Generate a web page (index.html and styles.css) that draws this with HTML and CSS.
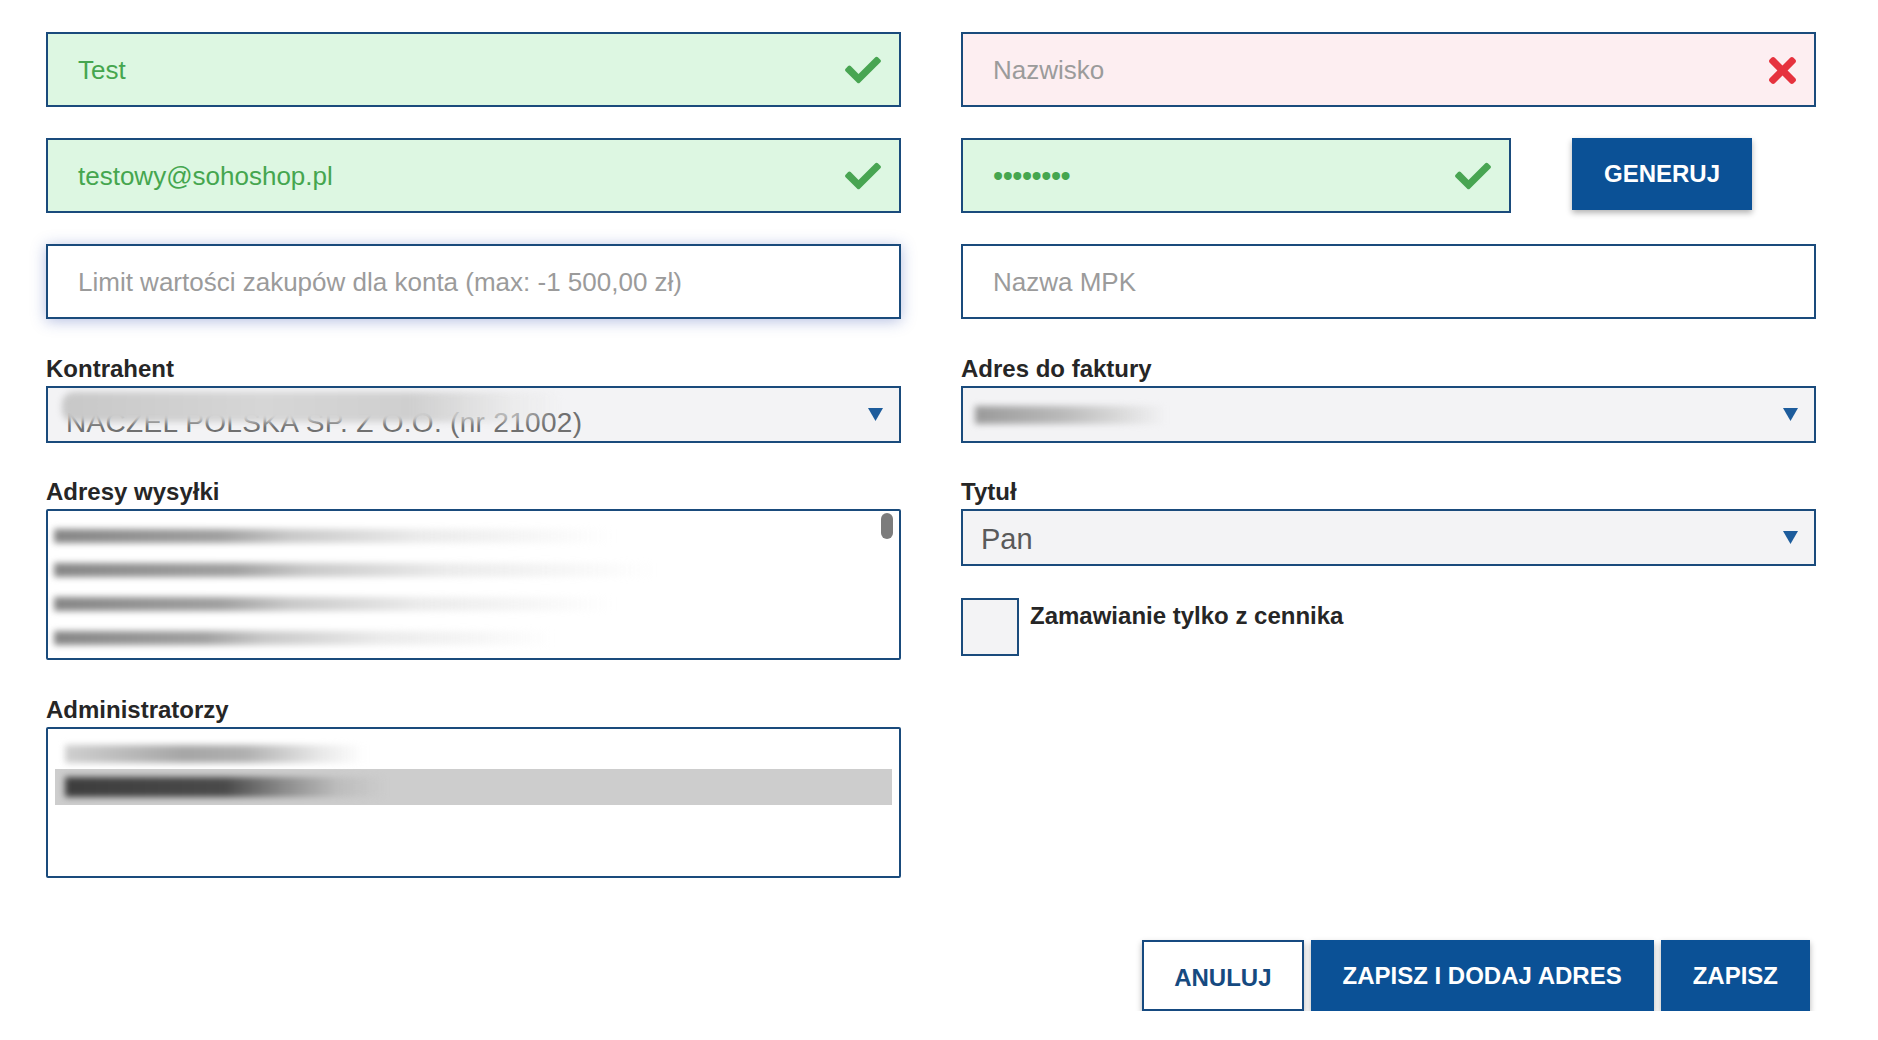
FILE: index.html
```html
<!DOCTYPE html>
<html lang="pl">
<head>
<meta charset="utf-8">
<title>Formularz konta</title>
<link rel="stylesheet" href="styles.css">
</head>
<body>
<div class="page">
  <div class="form">
    <div class="col">
      <div class="field valid">
        <span class="val">Test</span>
        <svg class="ico-check" viewBox="0 0 512 400"><path d="M173.898 383.404l-166.4-166.4c-9.997-9.997-9.997-26.206 0-36.204l36.203-36.204c9.997-9.998 26.207-9.998 36.204 0L192 256.69 432.095 16.596c9.997-9.997 26.207-9.997 36.204 0l36.203 36.204c9.997 9.997 9.997 26.206 0 36.204l-294.4 294.401c-9.998 9.997-26.207 9.997-36.204-.001z"/></svg>
      </div>
      <div class="field valid mt31">
        <span class="val">testowy@sohoshop.pl</span>
        <svg class="ico-check" viewBox="0 0 512 400"><path d="M173.898 383.404l-166.4-166.4c-9.997-9.997-9.997-26.206 0-36.204l36.203-36.204c9.997-9.998 26.207-9.998 36.204 0L192 256.69 432.095 16.596c9.997-9.997 26.207-9.997 36.204 0l36.203 36.204c9.997 9.997 9.997 26.206 0 36.204l-294.4 294.401c-9.998 9.997-26.207 9.997-36.204-.001z"/></svg>
      </div>
      <div class="field focus mt31">
        <span class="ph">Limit wartości zakupów dla konta (max: -1 500,00 zł)</span>
      </div>

      <div class="group g1">
        <div class="label">Kontrahent</div>
        <div class="select">
          <span class="sel-blur-text">NACZEL POLSKA SP. Z O.O. (nr 21002)</span>
          <span class="smear smear-kontr"></span>
          <svg class="caret" viewBox="0 0 14 14"><polygon points="0,1 14,1 7,13"/></svg>
        </div>
      </div>

      <div class="group g2">
        <div class="label">Adresy wysyłki</div>
        <div class="listbox">
          <div class="lrow"><span class="smear s-row w1"></span></div>
          <div class="lrow"><span class="smear s-row w2"></span></div>
          <div class="lrow"><span class="smear s-row w3"></span></div>
          <div class="lrow"><span class="smear s-row w4"></span></div>
          <span class="scroll-thumb"></span>
        </div>
      </div>

      <div class="group g3">
        <div class="label">Administratorzy</div>
        <div class="listbox admin">
          <div class="arow"><span class="smear s-admin1"></span></div>
          <div class="arow selected"><span class="smear s-admin2"></span></div>
        </div>
      </div>
    </div>

    <div class="col">
      <div class="field invalid">
        <span class="ph">Nazwisko</span>
        <svg class="ico-x" viewBox="0 0 352 352"><path d="M242.72 176l100.07-100.07c12.28-12.28 12.280-32.19 0-44.48l-22.24-22.24c-12.28-12.28-32.19-12.28-44.48 0L176 109.28 75.93 9.21c-12.28-12.28-32.19-12.28-44.48 0L9.21 31.45c-12.28 12.28-12.28 32.19 0 44.48L109.28 176 9.21 276.07c-12.28 12.28-12.28 32.19 0 44.48l22.24 22.24c12.28 12.28 32.2 12.28 44.48 0L176 242.72l100.07 100.07c12.28 12.28 32.2 12.28 44.48 0l22.24-22.24c12.28-12.28 12.28-32.19 0-44.48L242.72 176z"/></svg>
      </div>
      <div class="pw-row mt31">
        <div class="field valid pw">
          <span class="dots">••••••••</span>
          <svg class="ico-check" viewBox="0 0 512 400"><path d="M173.898 383.404l-166.4-166.4c-9.997-9.997-9.997-26.206 0-36.204l36.203-36.204c9.997-9.998 26.207-9.998 36.204 0L192 256.69 432.095 16.596c9.997-9.997 26.207-9.997 36.204 0l36.203 36.204c9.997 9.997 9.997 26.206 0 36.204l-294.4 294.401c-9.998 9.997-26.207 9.997-36.204-.001z"/></svg>
        </div>
        <button class="btn primary gen">GENERUJ</button>
      </div>
      <div class="field mt31">
        <span class="ph">Nazwa MPK</span>
      </div>

      <div class="group g1">
        <div class="label">Adres do faktury</div>
        <div class="select">
          <span class="smear smear-faktura"></span>
          <svg class="caret" viewBox="0 0 14 14"><polygon points="0,1 14,1 7,13"/></svg>
        </div>
      </div>

      <div class="group g2">
        <div class="label">Tytuł</div>
        <div class="select">
          <span class="sel-text">Pan</span>
          <svg class="caret" viewBox="0 0 14 14"><polygon points="0,1 14,1 7,13"/></svg>
        </div>
      </div>

      <div class="check-row">
        <span class="checkbox"></span>
        <span class="check-label">Zamawianie tylko z cennika</span>
      </div>
    </div>
  </div>

  <div class="actions">
    <button class="btn outline">ANULUJ</button>
    <button class="btn primary">ZAPISZ I DODAJ ADRES</button>
    <button class="btn primary">ZAPISZ</button>
  </div>
</div>
</body>
</html>
```

FILE: styles.css
```css
* { box-sizing: border-box; }

html, body {
  margin: 0;
  padding: 0;
  background: #ffffff;
  font-family: "Liberation Sans", Arial, sans-serif;
  color: #262626;
}

.page {
  width: 1878px;
  padding: 32px 62px 0 46px;
}

.form {
  display: flex;
  gap: 60px;
}

.col {
  width: 855px;
  display: flex;
  flex-direction: column;
}

.mt31 { margin-top: 31px; }

.field {
  height: 75px;
  border: 2px solid #1a4b7c;
  background: #ffffff;
  display: flex;
  align-items: center;
  justify-content: space-between;
  padding: 1px 18px 0 30px;
  font-size: 26px;
}

.field.valid { background: #ddf7e2; }
.field.invalid { background: #fdeef1; }
.field.focus { box-shadow: 0 2px 14px rgba(40, 70, 170, 0.35); }

.val { color: #45a64f; }
.ph { color: #9b9b9b; }

.dots {
  color: #45a64f;
  font-size: 29px;
  letter-spacing: -0.5px;
}

.ico-check {
  width: 36px;
  height: 28px;
  fill: #48a552;
  flex: none;
}

.ico-x {
  width: 27px;
  height: 29px;
  fill: #e6323e;
  flex: none;
}

.pw-row {
  display: flex;
  align-items: flex-start;
  gap: 61px;
}

.field.pw { width: 550px; }

.btn {
  font-family: "Liberation Sans", Arial, sans-serif;
  font-weight: bold;
  font-size: 24px;
  height: 71px;
  padding: 0 30px;
  border: 2px solid #0b5196;
  box-shadow: 0 3px 6px rgba(0, 0, 0, 0.3);
  cursor: pointer;
}

.btn.primary {
  background: #0b5196;
  color: #ffffff;
}

.btn.outline {
  background: #ffffff;
  color: #164a80;
  border-color: #164a80;
  padding-top: 4px;
}

.btn.gen {
  width: 180px;
  height: 72px;
  padding: 0;
}

.group { display: flex; flex-direction: column; }
.g1 { margin-top: 36px; }
.g2 { margin-top: 35px; }
.g3 { margin-top: 36px; }

.label {
  font-size: 24px;
  font-weight: bold;
  line-height: 28px;
  color: #262626;
  margin-bottom: 3px;
}

.select {
  position: relative;
  height: 57px;
  border: 2px solid #1a4b7c;
  background: #f3f3f5;
  display: flex;
  align-items: center;
  padding: 0 16px 0 18px;
  overflow: hidden;
}

.sel-text {
  font-size: 29px;
  color: #5a5a5a;
  flex: 1;
  padding-top: 3px;
}

.sel-blur-text {
  flex: 1;
  font-size: 28px;
  color: #707070;
  padding-top: 16px;
  letter-spacing: 0.3px;
}

.caret {
  width: 15px;
  height: 15px;
  fill: #1d5c9c;
  flex: none;
  margin-left: auto;
}

.smear {
  display: block;
  filter: blur(3px);
}

.smear-kontr {
  position: absolute;
  left: 14px;
  top: 4px;
  width: 500px;
  height: 30px;
  background: linear-gradient(to right, #c8c8c8 0%, #d6d6d6 40%, #cfcfcf 70%, rgba(230,230,230,0.6) 90%, rgba(243,243,245,0) 100%);
  border-radius: 12px;
}

.smear-faktura {
  width: 190px;
  height: 18px;
  margin-left: -6px;
  background: linear-gradient(to right, #9a9a9a 0%, #b9b9b9 45%, #d8d8d8 75%, rgba(243,243,245,0) 100%);
}

.listbox {
  position: relative;
  height: 151px;
  border: 2px solid #1a4b7c;
  border-radius: 2px;
  background: #ffffff;
  padding: 8px 0 0 6px;
}

.lrow {
  height: 34px;
  display: flex;
  align-items: center;
}

.s-row {
  height: 14px;
  background: linear-gradient(to right, #868686 0%, #a0a0a0 30%, #c8c8c8 42%, #ebebeb 65%, rgba(255,255,255,0) 100%);
}
.w1 { width: 560px; }
.w2 { width: 600px; }
.w3 { width: 560px; }
.w4 { width: 500px; }

.scroll-thumb {
  position: absolute;
  right: 6px;
  top: 2px;
  width: 12px;
  height: 26px;
  border-radius: 6px;
  background: #7c7c7c;
}

.admin { padding: 10px 7px 0 7px; }

.arow {
  height: 30px;
  display: flex;
  align-items: center;
  padding-left: 10px;
}

.arow.selected {
  height: 36px;
  background: #cdcdcd;
}

.s-admin1 {
  width: 300px;
  height: 18px;
  background: linear-gradient(to right, #cfcfcf 0%, #a6a6a6 40%, #b0b0b0 60%, #e8e8e8 85%, rgba(255,255,255,0) 100%);
}

.s-admin2 {
  width: 320px;
  height: 20px;
  background: linear-gradient(to right, #3d3d3d 0%, #4a4a4a 50%, #8a8a8a 68%, #bcbcbc 85%, rgba(205,205,205,0) 100%);
}

.check-row {
  margin-top: 32px;
  display: flex;
  align-items: flex-start;
  gap: 11px;
}

.checkbox {
  width: 58px;
  height: 58px;
  border: 2px solid #1a4b7c;
  background: #f3f3f5;
  flex: none;
}

.check-label {
  font-size: 24px;
  font-weight: bold;
  line-height: 28px;
  color: #262626;
  margin-top: 4px;
}

.actions {
  display: flex;
  justify-content: flex-end;
  gap: 7px;
  margin-top: 62px;
  padding-right: 6px;
}
```
